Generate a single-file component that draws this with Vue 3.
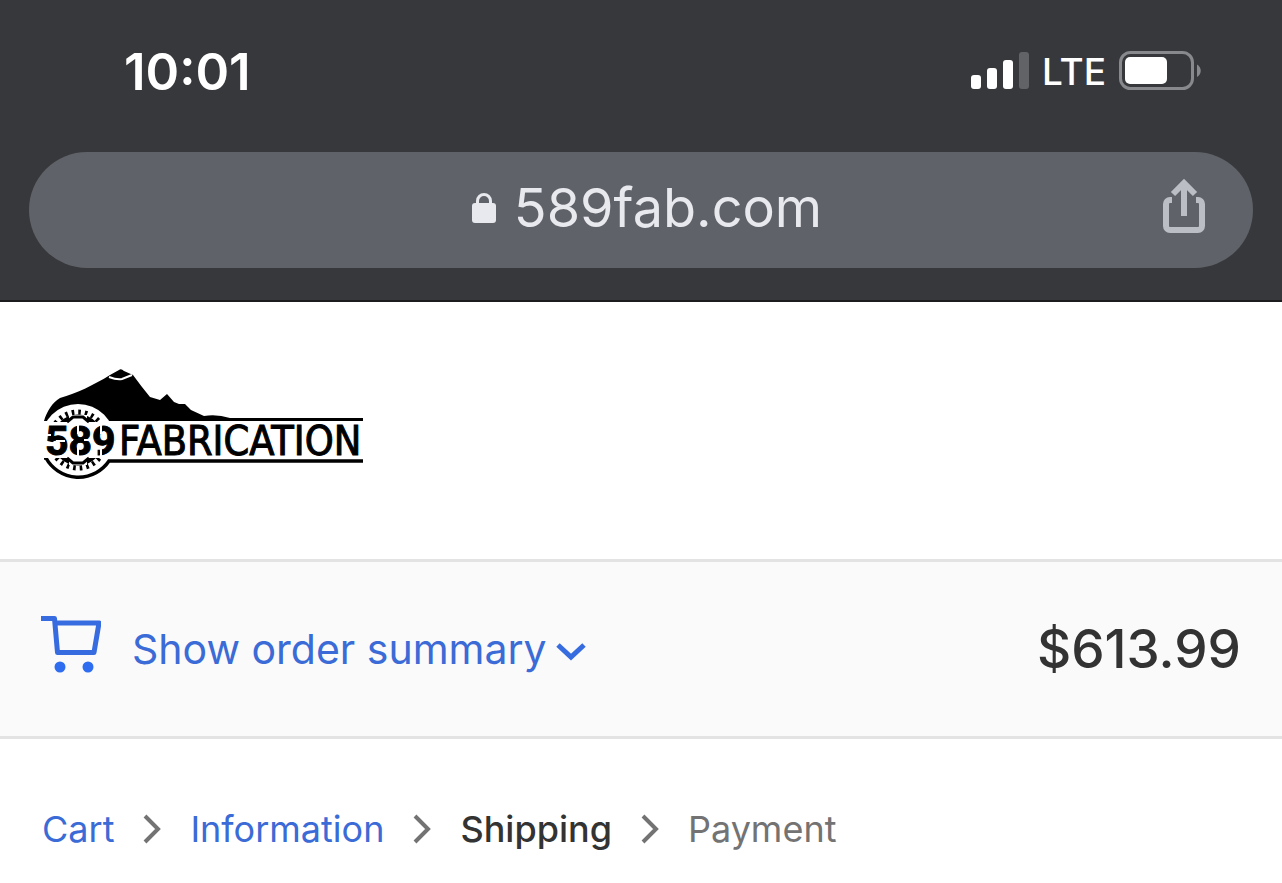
<template>
  <div class="page">
    <header class="browser">
      <div class="status-bar">
        <time class="clock">10:01</time>
        <div class="status-icons">
          <svg class="signal" viewBox="0 0 58 38" aria-label="Signal">
            <rect x="0" y="23" width="10" height="14" rx="3" />
            <rect x="16" y="16" width="10" height="21" rx="3" />
            <rect x="32" y="8" width="10" height="29" rx="3" />
            <rect x="48" y="0" width="10" height="37" rx="3" class="signal-off" />
          </svg>
          <span class="network">LTE</span>
          <svg class="battery" viewBox="0 0 82 40" aria-label="Battery">
            <rect x="1.5" y="1.5" width="72" height="36" rx="10" class="battery-shell" />
            <rect x="6" y="6" width="42" height="27" rx="5" class="battery-level" />
            <path d="M78 13.500c5 2.500 5 10 0 12.500z" class="battery-tip" />
          </svg>
        </div>
      </div>

      <div class="address-bar">
        <div class="address">
          <svg class="lock" viewBox="0 0 24 31" aria-hidden="true">
            <path d="M5.500 12V8a6.500 6.500 0 0 1 13 0v4" fill="none" stroke="#e8e9ee" stroke-width="3" />
            <rect x="0" y="10" width="24" height="20" rx="3" fill="#e8e9ee" />
          </svg>
          <span>589fab.com</span>
        </div>
        <button type="button" class="share" aria-label="Share">
          <svg viewBox="0 0 44 58" aria-hidden="true">
            <path d="M10 21H8a4 4 0 0 0-4 4v22a4 4 0 0 0 4 4h28a4 4 0 0 0 4-4V25a4 4 0 0 0-4-4h-2M22 37V4M11 15 22 4l11 11" />
          </svg>
        </button>
      </div>
    </header>

    <div class="banner">
      <a href="#" class="logo" aria-label="589 Fabrication">
        <svg viewBox="42 368 323 112">
          <path d="M44 421C47 411 52 403 60 398C77 393 94 385 110 375L119 370Q121 368 124 371L133 375L142 387L150 397L160 400L167 394L174 402L179 404L185 404L191 410L204 416Q217 414 230 418H363V421z" />
          <path d="M109 377q8 3 13 2l10-4" class="snow" />
          <circle cx="78" cy="441" r="37" class="cut" />
          <path d="M44 458H46A37 37 0 0 0 109 461H363" class="ring" />
          <circle cx="78" cy="440" r="28" class="teeth" />
          <circle cx="78" cy="440" r="23" class="gear" />
          <rect x="42" y="422" width="74" height="36" class="cut" />
          <path d="M69 415h18v7h-18zM69 458h18v7h-18z" class="cut" />
          <path d="M67 422l6-5h10l6 5M67 458l6 5h10l6-5" class="spoke" />
          <text x="45" y="455" class="number">589</text>
          <path d="M44 435h7M56 441h9M78 422v12M78 446v12M68 440h5M84 440h5M101 422v12M101 446v12" class="stencil" />
          <text x="119" y="455" class="name">FABRICATION</text>
        </svg>
      </a>
    </div>

    <section class="summary">
      <button type="button" class="summary-toggle">
        <svg class="cart" viewBox="0 0 60 66" aria-hidden="true">
          <path d="M0 2.500h13.500l3 34h36.500l5-29.500H14" />
          <circle cx="19" cy="51" r="5.500" />
          <circle cx="47" cy="51" r="5.500" />
        </svg>
        <span>Show order summary</span>
        <svg class="arrow-down" viewBox="0 0 30 24" aria-hidden="true">
          <path d="M2 8l13 12L28 8" />
        </svg>
      </button>
      <strong class="total">$613.99</strong>
    </section>

    <nav class="breadcrumb" aria-label="Breadcrumb">
      <template v-for="(step, index) in steps" :key="step.name">
        <svg v-if="index > 0" class="separator" viewBox="0 0 18 30" aria-hidden="true">
          <path d="M2 2l13 13L2 28" />
        </svg>
        <a v-if="step.state === 'done'" href="#">{{ step.name }}</a>
        <span v-else :class="step.state">{{ step.name }}</span>
      </template>
    </nav>
  </div>
</template>

<script setup>
const steps = [
  { name: 'Cart', state: 'done' },
  { name: 'Information', state: 'done' },
  { name: 'Shipping', state: 'current' },
  { name: 'Payment', state: 'upcoming' }
];
</script>

<style>
body {
  margin: 0;
  background: #ffffff;
}
</style>

<style scoped>
.page {
  font-family: Inter, 'Liberation Sans', sans-serif;
  color: #333333;
}

.page svg {
  display: block;
  flex: none;
}

button {
  padding: 0;
  border: none;
  background: none;
  font: inherit;
  cursor: pointer;
}

.browser {
  padding: 0 29px 32px;
  background: #37383b;
  border-bottom: 2px solid #1c1c1e;
}

.status-bar {
  display: flex;
  align-items: center;
  justify-content: space-between;
  height: 142px;
  padding: 0 52px 0 95px;
  box-sizing: border-box;
  margin-bottom: 10px;
  color: #ffffff;
}

.clock {
  font-size: 51px;
  font-weight: 600;
}

.status-icons {
  display: flex;
  align-items: center;
  gap: 13px;
}

.signal {
  width: 58px;
  height: 38px;
  fill: #ffffff;
}

.signal-off {
  fill: #626366;
}

.network {
  font-size: 37px;
  font-weight: 500;
}

.battery {
  width: 82px;
  height: 40px;
}

.battery-shell {
  fill: none;
  stroke: #88898c;
  stroke-width: 3;
}

.battery-level {
  fill: #ffffff;
}

.battery-tip {
  fill: #88898c;
}

.address-bar {
  display: grid;
  grid-template-columns: 1fr auto 1fr;
  align-items: center;
  height: 116px;
  padding: 0 47px 4px 59px;
  box-sizing: border-box;
  border-radius: 58px;
  background: #606269;
}

.address {
  grid-column: 2;
  display: flex;
  align-items: center;
  gap: 18px;
  font-size: 54px;
  line-height: 68px;
  color: #e8e9ee;
}

.lock {
  width: 24px;
  height: 31px;
}

.share {
  justify-self: end;
}

.share svg {
  width: 44px;
  height: 58px;
  fill: none;
  stroke: #bcbec6;
  stroke-width: 6;
}

.banner {
  padding: 66px 42px 79px;
  border-bottom: 3px solid #e3e3e3;
}

.logo {
  display: block;
  width: 323px;
}

.logo svg {
  width: 323px;
  height: 112px;
}

.snow {
  fill: none;
  stroke: #ffffff;
  stroke-width: 2;
}

.cut {
  fill: #ffffff;
}

.ring {
  fill: none;
  stroke: #000000;
  stroke-width: 3.5;
}

.teeth {
  fill: none;
  stroke: #000000;
  stroke-width: 5;
  stroke-dasharray: 2.6 4;
}

.gear {
  fill: none;
  stroke: #000000;
  stroke-width: 5;
}

.spoke {
  fill: none;
  stroke: #000000;
  stroke-width: 3;
}

.number {
  font-family: Roboto, sans-serif;
  font-size: 41px;
  font-weight: 700;
  stroke: #000000;
  stroke-width: 1;
}

.stencil {
  fill: none;
  stroke: #ffffff;
  stroke-width: 2;
}

.name {
  font-family: 'DejaVu Sans Condensed', 'DejaVu Sans', sans-serif;
  font-size: 41px;
  font-weight: 400;
  stroke: #000000;
  stroke-width: 1;
}

.summary {
  display: flex;
  align-items: center;
  justify-content: space-between;
  height: 174px;
  padding: 0 41px;
  background: #fafafa;
  border-bottom: 3px solid #e3e3e3;
}

.summary-toggle {
  display: flex;
  align-items: center;
  font-size: 41px;
  line-height: 52px;
  color: #3a6bd6;
}

.cart {
  width: 60px;
  height: 66px;
  margin-right: 31px;
  fill: #2f6df0;
}

.cart path {
  fill: none;
  stroke: #376be0;
  stroke-width: 5;
  stroke-linejoin: round;
}

.arrow-down {
  width: 30px;
  height: 24px;
  margin-left: 9px;
  fill: none;
  stroke: #376be0;
  stroke-width: 5;
}

.total {
  font-size: 53px;
  font-weight: 500;
}

.breadcrumb {
  display: flex;
  align-items: center;
  gap: 29px;
  padding: 68px 42px 32px;
  font-size: 36px;
  line-height: 44px;
}

.breadcrumb a {
  color: #3a6bd6;
  text-decoration: none;
}

.separator {
  width: 18px;
  height: 30px;
  fill: none;
  stroke: #737373;
  stroke-width: 4;
}

.current {
  font-weight: 500;
}

.upcoming {
  color: #737373;
}
</style>
